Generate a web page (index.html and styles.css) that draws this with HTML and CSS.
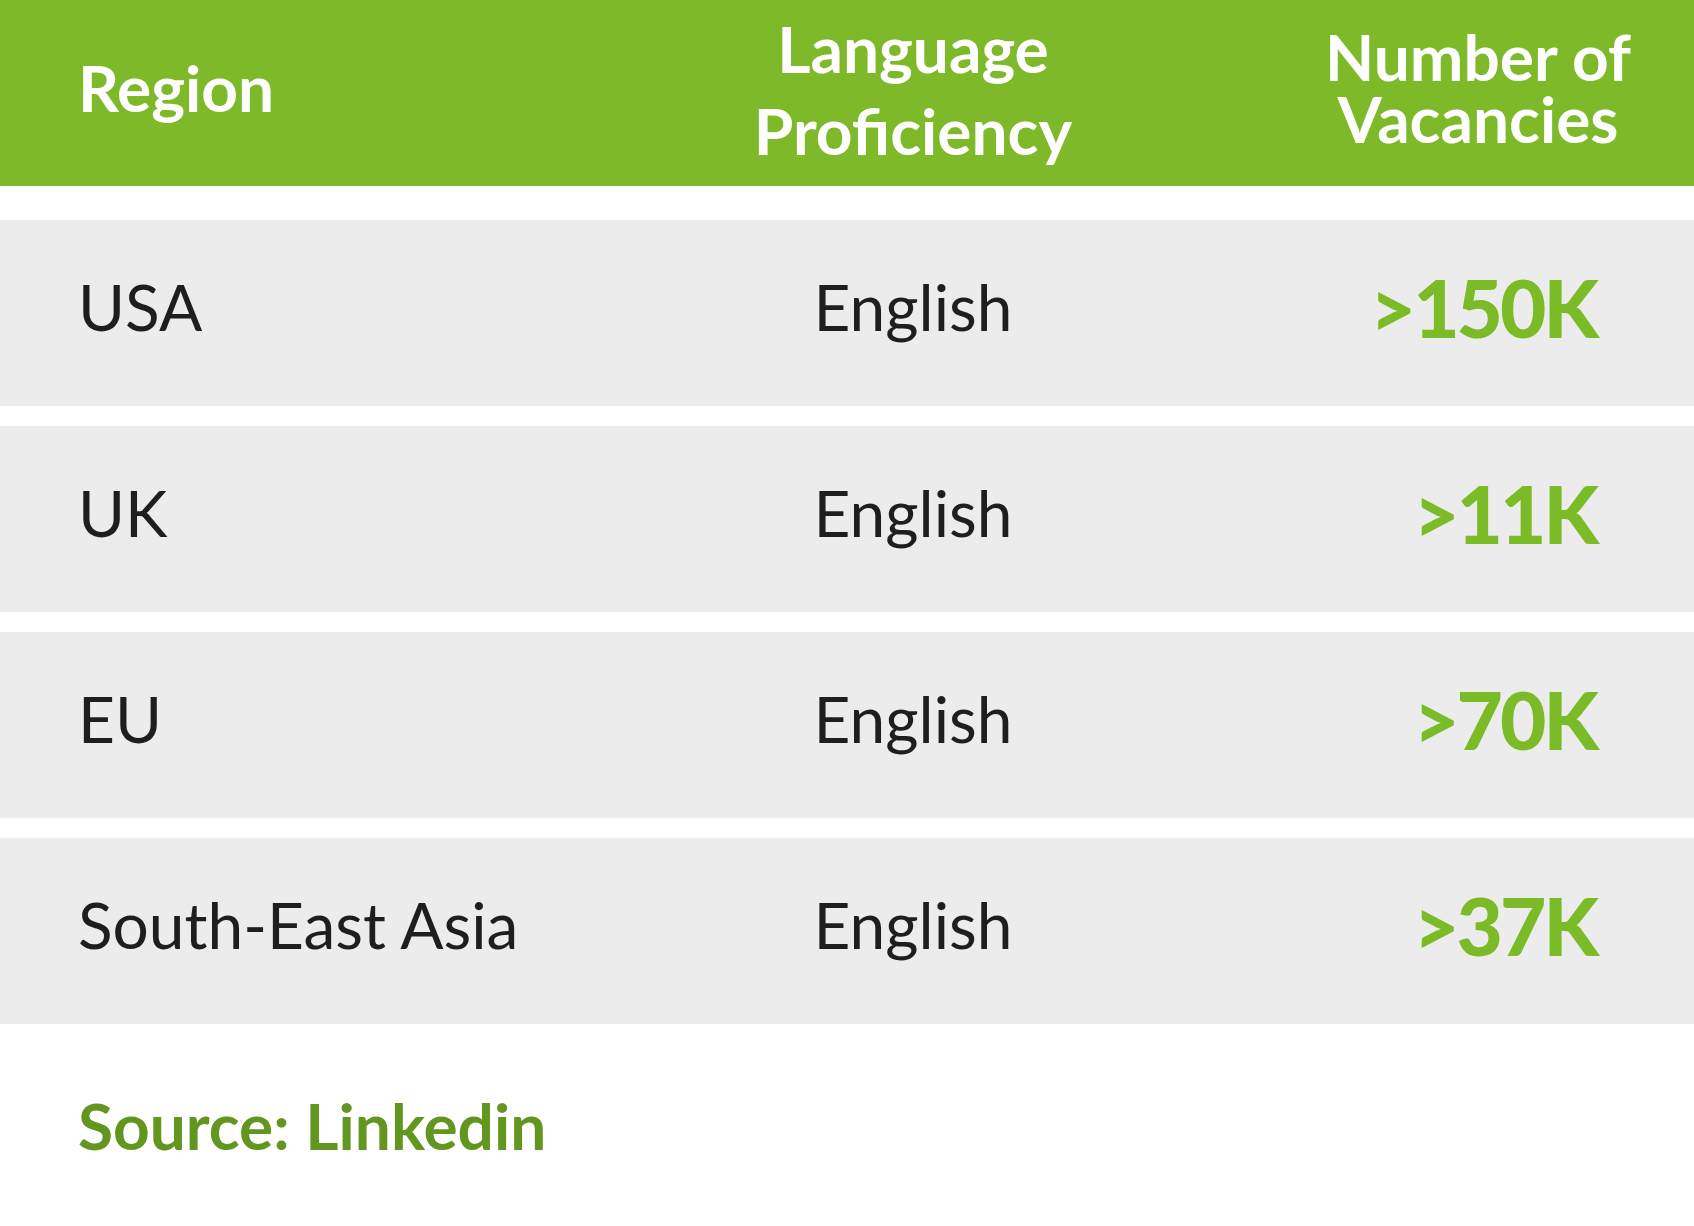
FILE: index.html
```html
<!DOCTYPE html>
<html lang="en">
<head>
<meta charset="utf-8">
<title>Vacancies by Region</title>
<link rel="stylesheet" href="styles.css">
</head>
<body>
<div class="page">
  <div class="row head">
    <div class="cell c-region">Region</div>
    <div class="cell c-lang">Language<br>Proficiency</div>
    <div class="cell c-num"><span class="num-head">Number of<br>Vacancies</span></div>
  </div>
  <div class="rows">
    <div class="row body">
      <div class="cell c-region">USA</div>
      <div class="cell c-lang">English</div>
      <div class="cell c-num">&gt;150K</div>
    </div>
    <div class="row body">
      <div class="cell c-region">UK</div>
      <div class="cell c-lang">English</div>
      <div class="cell c-num">&gt;11K</div>
    </div>
    <div class="row body">
      <div class="cell c-region">EU</div>
      <div class="cell c-lang">English</div>
      <div class="cell c-num">&gt;70K</div>
    </div>
    <div class="row body">
      <div class="cell c-region">South-East Asia</div>
      <div class="cell c-lang">English</div>
      <div class="cell c-num">&gt;37K</div>
    </div>
  </div>
  <div class="source">Source: Linkedin</div>
</div>
</body>
</html>
```
FILE: styles.css
```css
html, body {
  margin: 0;
  padding: 0;
  background: #ffffff;
}
body {
  font-family: "Lato", "Noto Sans", sans-serif;
  color: #1e1e1e;
}
.page {
  width: 1694px;
  height: 1226px;
  overflow: hidden;
}
.row {
  display: grid;
  grid-template-columns: 592px 486px 1fr;
  padding: 0 56px 0 78px;
  align-items: center;
  height: 186px;
  box-sizing: border-box;
}
.head {
  background: #7db928;
  color: #ffffff;
  font-weight: 700;
  font-size: 64px;
  margin-bottom: 34px;
}
.head .c-region {
  line-height: 1;
  padding-bottom: 10px;
}
.head .c-lang {
  text-align: center;
  line-height: 82px;
  padding-bottom: 6px;
}
.head .c-num {
  display: flex;
  justify-content: flex-end;
}
.num-head {
  width: 320px;
  text-align: center;
  line-height: 62px;
  padding-bottom: 10px;
}
.rows {
  display: flex;
  flex-direction: column;
  gap: 20px;
}
.body {
  background: #ececec;
  font-size: 64px;
  font-weight: 400;
  line-height: 1;
}
.body .cell {
  padding-bottom: 12px;
}
.body .c-lang {
  text-align: center;
}
.body .c-num {
  text-align: right;
  padding-right: 42px;
  color: #7cbb28;
  font-weight: 900;
  font-size: 80px;
  letter-spacing: -3px;
}
.source {
  padding: 70px 0 0 78px;
  font-size: 64px;
  font-weight: 700;
  line-height: 1;
  color: #63961f;
}
```
